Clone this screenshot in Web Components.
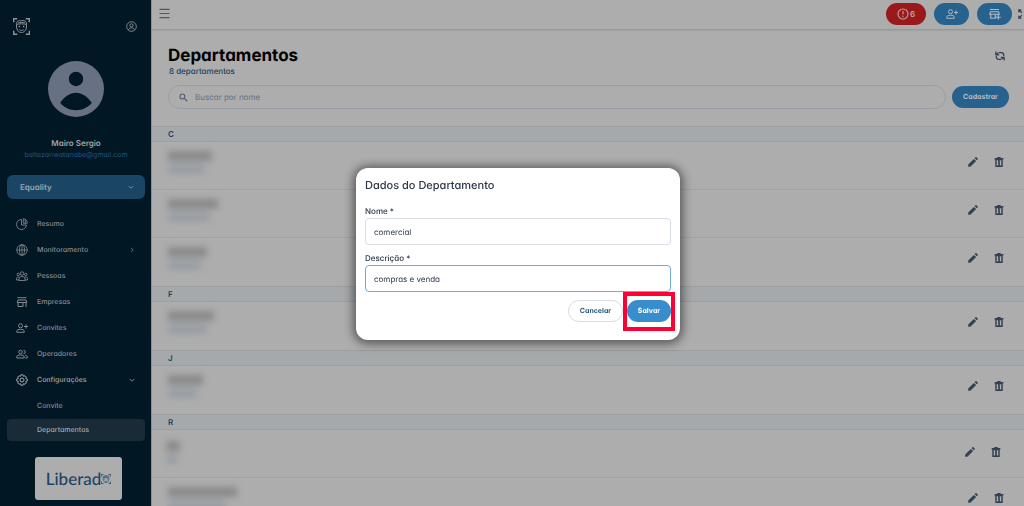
<!DOCTYPE html>
<html lang="pt-BR">
<head>
<meta charset="utf-8">
<meta name="viewport" content="width=device-width, initial-scale=1">
<title>Departamentos</title>
<style>
  html, body { margin: 0; height: 100%; }
  body {
    font: 500 7px/10px Inter, "Open Sans", sans-serif;
    font-feature-settings: "cv11";
    text-rendering: geometricPrecision;
    background: #adadad;
    overflow: hidden;
  }
</style>
</head>
<body>
<dept-page></dept-page>
<script>
const ICONS = {
  face: '<g fill="none" stroke="currentColor" stroke-width="1.4"><path d="M1 6V1h5M18 1h5v5M23 18v5h-5M6 23H1v-5" stroke-width="2"/><path d="M5 9c-1-3 2-6 6-5 4-1 9 0 8 5M5 9c4-1 10-1 14 0M5 12c0 5 3 8.500 7 8.500s7-3.500 7-8.500M5 9v4M19 9v4M9 16.500c2 1.500 4 1.500 6 0M7 7c3-1 7-1 10 0"/><path d="M8 12h2M14 12h2" stroke-width="2"/></g>',
  account: '<g fill="none" stroke="currentColor" stroke-width="2"><circle cx="12" cy="12" r="10.5"/><circle cx="12" cy="9.500" r="3.500"/><path d="M5.500 19c1-3 3.500-4 6.500-4s5.500 1 6.500 4"/></g>',
  avatar: '<path fill="currentColor" fill-rule="evenodd" d="M12 0a12 12 0 1 0 0 24 12 12 0 0 0 0-24zm0 4.600a3.100 3.100 0 1 1 0 6.200 3.100 3.100 0 0 1 0-6.200zM5.200 17.900C7 15.400 9.300 13.600 12 13.600s5 1.800 6.800 4.300c-1.700 2.100-4.200 3.200-6.800 3.200s-5.100-1.100-6.800-3.200z"/>',
  down: '<path fill="none" stroke="currentColor" stroke-width="3" d="M3 8l9 9 9-9"/>',
  right: '<path fill="none" stroke="currentColor" stroke-width="3" d="M8 3l9 9-9 9"/>',
  pie: '<g fill="none" stroke="currentColor" stroke-width="1.700" stroke-linejoin="round"><path d="M11 3a10 10 0 1 0 10 11H11z"/><path d="M14.500 1.500v9h8a9 9 0 0 0-8-9zM18.500 3.500v7"/></g>',
  globe: '<g fill="none" stroke="currentColor" stroke-width="1.600"><circle cx="12" cy="12" r="10.500"/><ellipse cx="12" cy="12" rx="5" ry="10.500"/><path d="M12 1.500v21M1.500 12h21"/></g>',
  group: '<g fill="none" stroke="currentColor" stroke-width="1.700"><circle cx="12" cy="7" r="3.500"/><circle cx="4.500" cy="9" r="2.500"/><circle cx="19.500" cy="9" r="2.500"/><path d="M6 21v-3c0-3 2-5 6-5s6 2 6 5v3zM6 20H1v-3c0-2 2-3.500 5-3M18 20h5v-3c0-2-2-3.500-5-3"/></g>',
  store: '<path fill="none" stroke="currentColor" stroke-width="2" d="M3 3.500h18M4 8h16l1.500 5h-19zM4 13v8h10v-8M20 13v9"/>',
  useradd: '<g fill="none" stroke="currentColor" stroke-width="2"><circle cx="9" cy="7.500" r="4"/><path d="M1.500 20.500v-2c0-2.500 3-4 7.500-4s7.500 1.500 7.500 4v2zM20 5v8M16 9h8"/></g>',
  users: '<g fill="none" stroke="currentColor" stroke-width="2"><circle cx="9" cy="8" r="3.500"/><path d="M1.500 20v-2c0-2.500 3-4 7.500-4s7.500 1.500 7.500 4v2zM15 4.500a3.500 3.500 0 0 1 0 7M18 14c3 .5 4.500 2 4.500 4v2H19"/></g>',
  gear: '<g fill="none" stroke="currentColor" stroke-width="2"><path stroke-linejoin="round" d="M10 1.500h4l1 3 3-1 2.500 2.500-1 3 3 1v4l-3 1 1 3-2.500 2.500-3-1-1 3h-4l-1-3-3 1L3.500 18l1-3-3-1v-4l3-1-1-3L6 3.500l3 1z"/><circle cx="12" cy="12" r="4"/></g>',
  menu: '<path stroke="currentColor" stroke-width="2.500" d="M1 3h22M1 12h22M1 21h22"/>',
  alert: '<g fill="none" stroke="currentColor" stroke-width="2.200"><circle cx="12" cy="12" r="10"/><path d="M12 6v7M12 15.500v2.500"/></g>',
  storeadd: '<path fill="none" stroke="currentColor" stroke-width="2.400" d="M2 3h18M3 7.500h16l1.500 5h-19zM3.500 13v7.500h9V13M18.500 13v10M13.500 18.500h10"/>',
  expand: '<path fill="none" stroke="currentColor" stroke-width="3" d="M2 8V2h6M2 2l7 7M2 22l7-7M2 16v6h6M22 2l-7 7M16 2h6v6M22 22l-7-7M16 22h6v-6"/>',
  sync: '<g fill="none" stroke="currentColor" stroke-width="3"><path d="M2 1v8h8M22 23v-8h-8M9 4h6c4 0 6 2 6 6v2M15 20H9c-4 0-6-2-6-6v-2M2.500 9L8 4M21.500 15L16 20"/></g>',
  search: '<g fill="none" stroke="currentColor" stroke-width="3"><circle cx="9" cy="9" r="6.500"/><path d="M14 14l8 8"/></g>',
  pencil: '<path fill="currentColor" d="M.5 23.500v-5.300L14.200 4.500l5.300 5.300L5.800 23.500zM16 2.700L18 .8c.7-.7 1.600-.7 2.300 0l2.900 2.900c.7.7.7 1.600 0 2.300l-1.900 2z"/>',
  trash: '<path fill="currentColor" fill-rule="evenodd" d="M8 0h8v2.500h6.500V6H21v18H3V6H1.500V2.500H8zM6.500 7.500v13h3.500v-13zM14 7.500v13h3.500v-13z"/>'
};

const define = (name, css, html) => {
  const template = document.createElement('template');
  template.innerHTML = `<style>*{box-sizing:border-box}button,input{font:inherit;font-feature-settings:inherit;text-rendering:inherit;color:inherit;margin:0}button{border:0;padding:0;background:none;cursor:pointer}a{color:inherit;text-decoration:none}${css}</style>${html}`;
  customElements.define(name, class extends HTMLElement {
    constructor() {
      super();
      this.attachShadow({ mode: 'open' }).append(template.content.cloneNode(true));
    }
  });
};

customElements.define('ui-icon', class extends HTMLElement {
  constructor() { super(); this.attachShadow({ mode: 'open' }); }
  connectedCallback() {
    this.shadowRoot.innerHTML = `<style>:host{display:block;flex:none;width:var(--size,12px);height:var(--size,12px)}svg{display:block;width:100%;height:100%}</style><svg viewBox="0 0 24 24" aria-hidden="true">${ICONS[this.getAttribute('name')]}</svg>`;
  }
});

define('nav-item', `
  :host { display: block; color: #858b91; }
  a { display: flex; align-items: center; gap: 9px; height: 26px; padding: 0 10px 0 9px; border-radius: 4px; }
  .label { flex: 1; }
  ::slotted([slot=end]) { --size: 6px; }
  :host([sub]) a { height: 22px; padding-left: 30px; }
  :host([bright]) { color: #a3a7aa; }
  :host([active]) a { background: #1a2b38; color: #a3a7aa; }
`, `<a href="#"><slot name="icon"></slot><span class="label"><slot></slot></span><slot name="end"></slot></a>`);

define('side-bar', `
  :host { display: flex; flex-direction: column; background: #021724; color: #a0a5a9; padding: 0 6px 0 7px; }
  header { display: flex; justify-content: space-between; align-items: center; padding: 17px 8px 0 6px; height: 36px; color: #8c9297; }
  header ui-icon:first-child { --size: 17px; }
  header ui-icon:last-child { --size: 11px; }
  .profile { display: flex; flex-direction: column; align-items: center; padding-top: 25px; line-height: 12px; }
  .profile ui-icon { --size: 56px; color: #687183; margin-bottom: 20px; }
  strong { font-size: 8px; font-weight: 600; }
  .mail { color: #1f5583; font-weight: 400; }
  .company { display: flex; align-items: center; justify-content: space-between; width: 100%; height: 24px; margin-top: 14px; padding: 0 11px 0 13px; border-radius: 6px; background: #1b4564; font-size: 8px; font-weight: 600; }
  .company ui-icon { --size: 6px; }
  nav { margin-top: 12px; }
  .config-end { margin-bottom: 2px; }
  .brand { display: flex; align-items: center; justify-content: center; align-self: center; width: 87px; height: 43px; margin: 16px 0 0 5px; border-radius: 3px; background: #adadad; color: #1e4262; font: 500 17px/20px Lato, sans-serif; }
  .brand ui-icon { --size: 10px; }
`, `
  <header><ui-icon name="face"></ui-icon><ui-icon name="account"></ui-icon></header>
  <div class="profile"><ui-icon name="avatar"></ui-icon><strong>Mairo Sergio</strong><a class="mail" href="mailto:baltezanwatanabe@gmail.com">baltezanwatanabe@gmail.com</a></div>
  <button class="company">Equality<ui-icon name="down"></ui-icon></button>
  <nav>
    <nav-item><ui-icon slot="icon" name="pie"></ui-icon>Resumo</nav-item>
    <nav-item><ui-icon slot="icon" name="globe"></ui-icon>Monitoramento<ui-icon slot="end" name="right"></ui-icon></nav-item>
    <nav-item><ui-icon slot="icon" name="group"></ui-icon>Pessoas</nav-item>
    <nav-item><ui-icon slot="icon" name="store"></ui-icon>Empresas</nav-item>
    <nav-item><ui-icon slot="icon" name="useradd"></ui-icon>Convites</nav-item>
    <nav-item><ui-icon slot="icon" name="users"></ui-icon>Operadores</nav-item>
    <nav-item bright class="config-end"><ui-icon slot="icon" name="gear"></ui-icon>Configurações<ui-icon slot="end" name="down"></ui-icon></nav-item>
    <nav-item sub class="config-end">Convite</nav-item>
    <nav-item sub active>Departamentos</nav-item>
  </nav>
  <div class="brand">Liberad<ui-icon name="face"></ui-icon></div>
`);

define('top-bar', `
  :host { display: flex; align-items: center; gap: 8px; height: 30px; padding: 0 0 2px 7px; border-bottom: 1px solid #979899; box-shadow: 0 1px 1px #a2a3a3; color: #4c596b; overflow: hidden; }
  .menu { margin-right: auto; --size: 11px; }
  .pill { display: flex; align-items: center; justify-content: center; width: 35px; height: 22px; border-radius: 11px; background: #27628f; color: #aeb8c0; }
  .alert { width: 40px; background: #9a191b; font-weight: 600; font-size: 8px; gap: 1px; color: #c0a5a5; }
  .expand { --size: 10px; width: 6px; margin-left: -2px; overflow: hidden; color: #344052; }
`, `
  <button class="menu" aria-label="Menu"><ui-icon name="menu"></ui-icon></button>
  <button class="pill alert" aria-label="Alertas"><ui-icon name="alert"></ui-icon>6</button>
  <button class="pill" aria-label="Adicionar pessoa"><ui-icon name="useradd"></ui-icon></button>
  <button class="pill" aria-label="Adicionar empresa"><ui-icon name="storeadd"></ui-icon></button>
  <button class="expand" aria-label="Tela cheia"><ui-icon name="expand"></ui-icon></button>
`);

define('page-head', `
  :host { display: block; padding: 16px 15px 17px 16px; }
  .title { display: flex; justify-content: space-between; align-items: center; }
  h1 { margin: 0; font-size: 17px; line-height: 20px; font-weight: 700; color: #000; }
  .title button { color: #344052; --size: 10px; margin-right: 4px; }
  p { margin: 0 0 9px 1px; font-size: 8px; line-height: 10px; color: #1b405c; }
  form { display: flex; align-items: center; gap: 6px; }
  label { flex: 1; display: flex; align-items: center; gap: 7px; height: 24px; padding: 0 10px; border: 1px solid #999da5; border-radius: 12px; color: #536073; --size: 9px; }
  input { flex: 1; border: 0; outline: 0; padding: 0; background: none; font-weight: 400; font-size: 8px; }
  input::placeholder { color: #667080; opacity: 1; }
  .add { width: 57px; height: 22px; border-radius: 11px; background: #27628f; color: #b0bcc5; font-weight: 700; }
`, `
  <div class="title"><h1>Departamentos</h1><button aria-label="Atualizar"><ui-icon name="sync"></ui-icon></button></div>
  <p>8 departamentos</p>
  <form><label><ui-icon name="search"></ui-icon><input type="search" placeholder="Buscar por nome" aria-label="Buscar por nome"></label><button class="add" type="button">Cadastrar</button></form>
`);

define('dept-group', `
  :host { display: block; }
  h2 { margin: 0; height: 16px; padding-left: 16px; border: solid #9b9fa4; border-width: 1px 0; background: #a6a9ab; color: #1b405c; font-size: 8px; line-height: 14px; font-weight: 600; }
`, `<h2><slot name="letter"></slot></h2><slot></slot>`);

define('dept-row', `
  :host { display: flex; justify-content: space-between; align-items: flex-start; height: 48px; padding: 9px 20px 0 16px; border-bottom: 1px solid #a1a2a3; box-sizing: border-box; color: #344052; }
  :host(:last-child) { border-bottom: 0; }
  .redacted { width: var(--name, 44px); filter: blur(3px); }
  .redacted i { display: block; height: 10px; background: #8a8a8a; }
  .redacted i + i { width: 84%; margin-top: 3px; background: #989fa4; }
  .actions { display: flex; gap: 16px; padding-top: 6px; --size: 10px; }
  :host([inset]) { padding: 11px 23px 0 14px; }
`, `<div class="redacted"><i></i><i></i></div><div class="actions"><button aria-label="Editar"><ui-icon name="pencil"></ui-icon></button><button aria-label="Excluir"><ui-icon name="trash"></ui-icon></button></div>`);

define('dept-dialog', `
  :host { display: block; width: 324px; padding: 9px; box-sizing: border-box; border-radius: 12px; background: #fff; color: #29364a; box-shadow: 0 1px 10px 3px #0000007a; }
  h2 { margin: 0 0 12px; font-size: 11px; line-height: 16px; font-weight: 500; }
  label { display: block; font-size: 8px; line-height: 12px; }
  input { display: block; width: 100%; height: 27px; margin: 1px 0 7px; padding: 0 8px; border: 1px solid #d6dde6; border-radius: 4px; outline: 0; background: #fff; font-size: 8px; font-weight: 400; }
  .focused { border-color: #72abd8; }
  .buttons { display: flex; justify-content: flex-end; gap: 4px; padding: 1px 0 9px; }
  .buttons button { height: 22px; border-radius: 11px; font-weight: 700; }
  .cancel { width: 55px; border: 1px solid #d6dde6; color: #2b5b81; }
  .save { width: 44px; background: #388dcc; color: #fff; }
  .marked { position: relative; display: flex; }
  .marked::after { content: ""; position: absolute; inset: -8px -4px -9px; border: 4px solid #ff0034; pointer-events: none; }
`, `
  <h2>Dados do Departamento</h2>
  <label for="nome">Nome *</label><input id="nome" value="comercial">
  <label for="desc">Descrição *</label><input id="desc" class="focused" value="compras e venda">
  <div class="buttons"><button class="cancel">Cancelar</button><span class="marked"><button class="save">Salvar</button></span></div>
`);

define('dept-page', `
  :host { display: grid; grid-template-columns: 151px minmax(0, 1fr); height: 100vh; overflow: hidden; }
  main { border-left: 1px solid #8b9095; overflow: hidden; }
  .overlay { position: fixed; inset: 0; display: flex; align-items: center; justify-content: center; padding: 2px 0 0 12px; box-sizing: border-box; }
`, `
  <side-bar></side-bar>
  <main>
    <top-bar></top-bar>
    <page-head></page-head>
    <dept-group><span slot="letter">C</span><dept-row></dept-row><dept-row style="--name:50px"></dept-row><dept-row style="--name:39px"></dept-row></dept-group>
    <dept-group><span slot="letter">F</span><dept-row style="--name:46px"></dept-row></dept-group>
    <dept-group><span slot="letter">J</span><dept-row style="--name:35px"></dept-row></dept-group>
    <dept-group><span slot="letter">R</span><dept-row inset style="--name:14px"></dept-row><dept-row style="--name:69px"></dept-row></dept-group>
  </main>
  <div class="overlay"><dept-dialog role="dialog" aria-label="Dados do Departamento"></dept-dialog></div>
`);
</script>
</body>
</html>
